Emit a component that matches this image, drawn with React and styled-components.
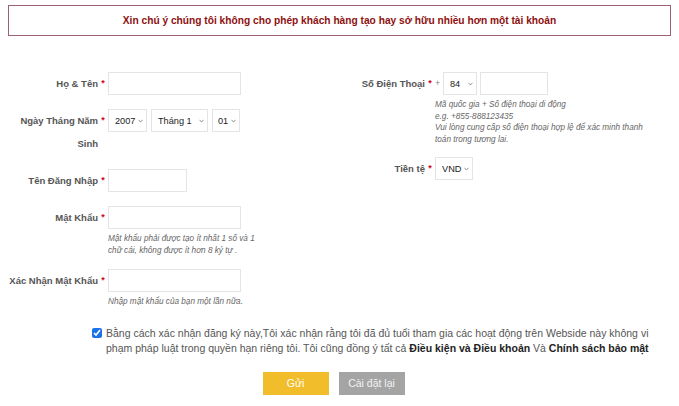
import React from 'react'
import { styled, createGlobalStyle } from 'styled-components'

const GlobalStyle = createGlobalStyle`
body {
  margin: 0;
  background: #fff;
  font-family: "Liberation Sans", Arial, sans-serif;
}
`

const Page = styled.div`
padding: 5px 8px 0;
width: 679px;
box-sizing: border-box;
`

const Notice = styled.div`
height: 31px;
box-sizing: border-box;
border: 1px solid #9c6272;
display: flex;
align-items: center;
justify-content: center;
color: #8e1010;
font-weight: bold;
font-size: 10.2px;
`

const Columns = styled.div`
display: flex;
margin-top: 36px;
`

const Column = styled.div`
width: ${({ width }) => width || 'auto'};
flex: ${({ width }) => (width ? 'none' : '1')};
`

const Row = styled.div`
display: flex;
align-items: flex-start;
margin-bottom: ${({ gap }) => gap ?? 14}px;
`

const Label = styled.div`
width: 90px;
text-align: right;
font-weight: bold;
font-size: 9.5px;
line-height: 23px;
color: #555;
`

const Star = styled.span`
width: 10px;
text-align: center;
color: #d0021b;
font-size: 9px;
line-height: 23px;
font-weight: bold;
`

const Plus = styled.span`
width: 5px;
color: #888;
font-size: 9px;
line-height: 23px;
`

const Field = styled.div`
display: flex;
flex-direction: column;
`

const Controls = styled.div`
display: flex;
gap: ${({ gap }) => gap || 4}px;
`

const Input = styled.input`
width: ${({ w }) => w}px;
height: 23px;
box-sizing: border-box;
border: 1px solid #e4e4e4;
outline: none;
font-size: 9px;
`

const SelectWrap = styled.div`
position: relative;
width: ${({ w }) => w}px;
height: 23px;
`

const NativeSelect = styled.select`
appearance: none;
width: 100%;
height: 100%;
box-sizing: border-box;
border: 1px solid #e4e4e4;
background: #fff;
padding: 0 0 0 ${({ pad }) => pad || 6}px;
font-family: "Liberation Sans", Arial, sans-serif;
font-size: 9.2px;
color: #222;
outline: none;
`

const Chevron = styled.svg`
position: absolute;
right: 4px;
top: 10px;
width: 5px;
height: 4px;
pointer-events: none;
`

const Hint = styled.div`
margin-top: ${({ top }) => top ?? 3}px;
font-size: 8.2px;
line-height: 11.6px;
font-style: italic;
color: #666;
white-space: nowrap;
`

const Consent = styled.label`
display: flex;
align-items: flex-start;
margin: 18px 0 0 84px;
font-size: 10.5px;
line-height: 15px;
color: #555;
white-space: nowrap;
`

const Check = styled.input`
width: 10px;
height: 10px;
margin: 2px 4px 0 0;
flex: none;
accent-color: #1a73e8;
`

const Strong = styled.b`
color: #222;
`

const Buttons = styled.div`
display: flex;
justify-content: center;
gap: 10px;
margin-top: 16px;
padding-right: 12px;
`

const Button = styled.button`
width: 66px;
height: 23px;
border: none;
background: ${({ tone }) => (tone === 'primary' ? '#f1bd2b' : '#a4a4a4')};
color: ${({ tone }) => (tone === 'primary' ? '#fff' : '#f2f2f2')};
font-family: "Liberation Sans", Arial, sans-serif;
font-size: 10.5px;
cursor: pointer;
`

const Select = ({ w, value, options, pad }) => (
  <SelectWrap w={w}>
    <NativeSelect defaultValue={value} pad={pad}>
      {options.map(o => <option key={o}>{o}</option>)}
    </NativeSelect>
    <Chevron viewBox="0 0 5 4">
      <path d="M0.5 0.8 L2.5 3 L4.5 0.8" fill="none" stroke="#666" strokeWidth="0.7" />
    </Chevron>
  </SelectWrap>
)

const App = () => {
  return (
    <Page>
      <GlobalStyle />
      <Notice>Xin chú ý chúng tôi không cho phép khách hàng tạo hay sở hữu nhiều hơn một tài khoản</Notice>
      <Columns>
        <Column width="327px">
          <Row>
            <Label>Họ &amp; Tên</Label>
            <Star>*</Star>
            <Field><Input w={133} /></Field>
          </Row>
          <Row>
            <Label>Ngày Tháng Năm Sinh</Label>
            <Star>*</Star>
            <Controls gap={4}>
              <Select w={39} value="2007" options={['2007', '2006', '2005']} />
              <Select w={57} value="Tháng 1" options={['Tháng 1', 'Tháng 2', 'Tháng 3']} />
              <Select w={28} value="01" options={['01', '02', '03']} pad={5} />
            </Controls>
          </Row>
          <Row>
            <Label>Tên Đăng Nhập</Label>
            <Star>*</Star>
            <Field><Input w={79} /></Field>
          </Row>
          <Row gap={13}>
            <Label>Mật Khẩu</Label>
            <Star>*</Star>
            <Field>
              <Input w={133} type="password" />
              <Hint top={4}>Mật khẩu phải được tạo ít nhất 1 số và 1<br />chữ cái, không được ít hơn 8 ký tự .</Hint>
            </Field>
          </Row>
          <Row gap={0}>
            <Label>Xác Nhận Mật Khẩu</Label>
            <Star>*</Star>
            <Field>
              <Input w={133} type="password" />
              <Hint top={4}>Nhập mật khẩu của bạn một lần nữa.</Hint>
            </Field>
          </Row>
        </Column>
        <Column>
          <Row gap={12}>
            <Label>Số Điện Thoại</Label>
            <Star>*</Star>
            <Field>
              <Controls gap={3}>
                <Plus>+</Plus>
                <Select w={34} value="84" options={['84', '855', '66']} />
                <Input w={68} />
              </Controls>
              <Hint top={4}>
                Mã quốc gia + Số điện thoại di động<br />
                e.g. +855-888123435<br />
                Vui lòng cung cấp số điện thoại hợp lệ để xác minh thanh<br />
                toán trong tương lai.
              </Hint>
            </Field>
          </Row>
          <Row>
            <Label>Tiền tệ</Label>
            <Star>*</Star>
            <Select w={38} value="VND" options={['VND', 'USD', 'THB']} />
          </Row>
        </Column>
      </Columns>
      <Consent>
        <Check type="checkbox" defaultChecked />
        <span>
          Bằng cách xác nhận đăng ký này,Tôi xác nhận rằng tôi đã đủ tuổi tham gia các hoạt động trên Webside này không vi<br />
          phạm pháp luật trong quyền hạn riêng tôi. Tôi cũng đồng ý tất cả <Strong>Điều kiện và Điều khoản</Strong> Và <Strong>Chính sách bảo mật</Strong>
        </span>
      </Consent>
      <Buttons>
        <Button tone="primary">Gửi</Button>
        <Button>Cài đặt lại</Button>
      </Buttons>
    </Page>
  )
}

export default App
